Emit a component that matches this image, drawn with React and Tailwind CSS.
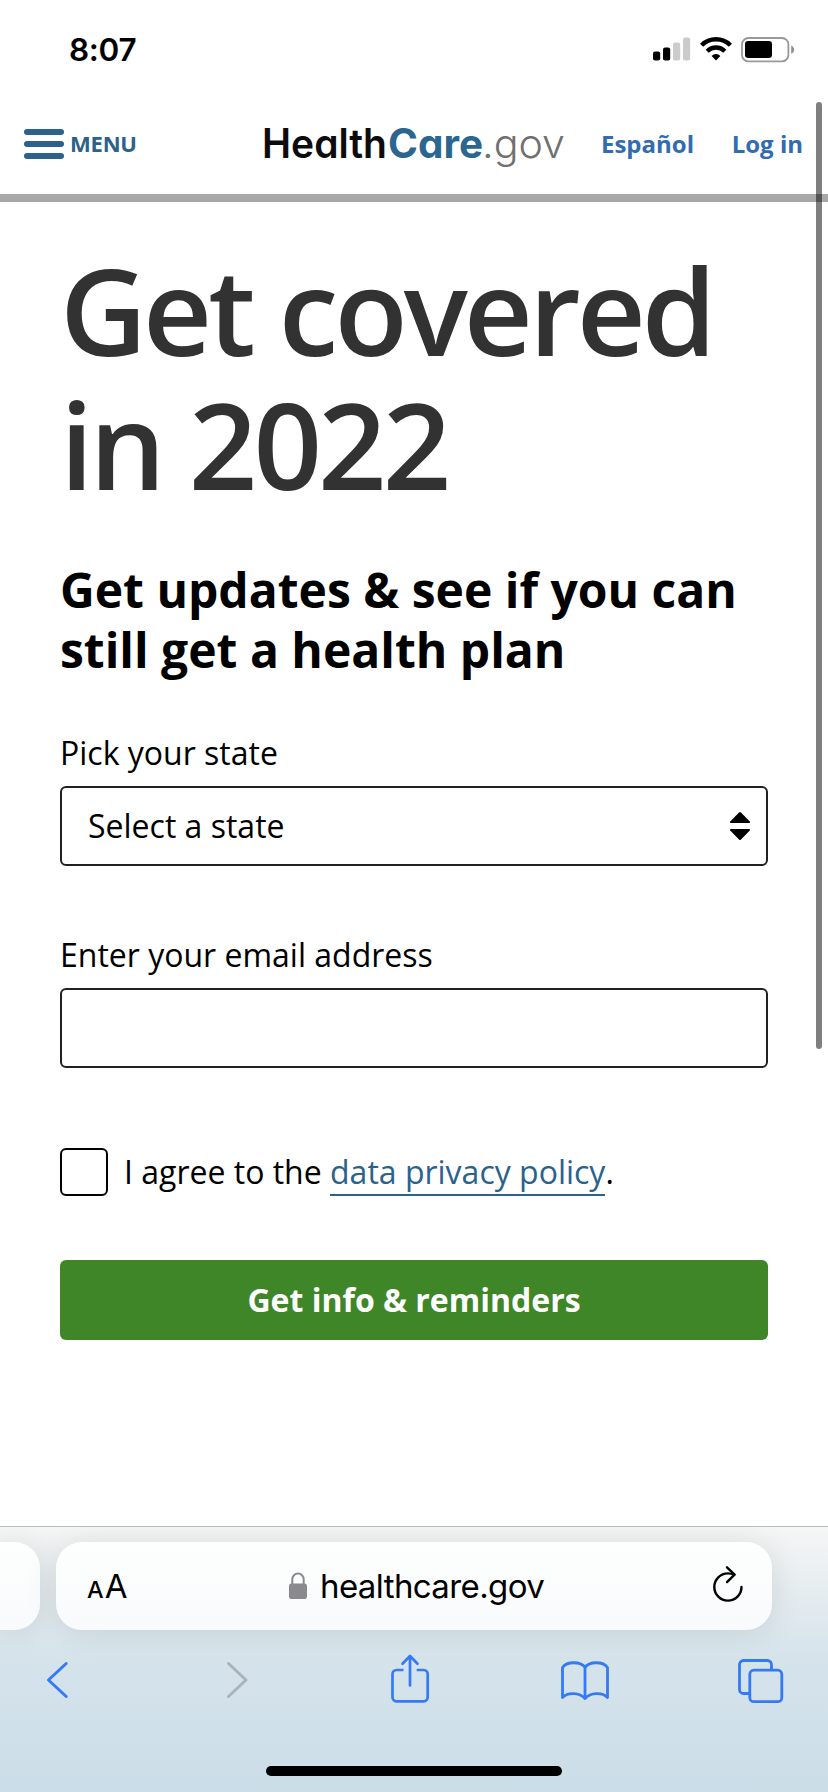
import React, { useState } from 'react';

const SignalIcon = () => (
  <svg width="38" height="24" viewBox="0 0 38 24">
    <rect x="0" y="14.5" width="7.2" height="9" rx="2" fill="#000" />
    <rect x="10" y="10.5" width="7.2" height="13" rx="2" fill="#000" />
    <rect x="20" y="5.5" width="7.2" height="18" rx="2" fill="#cbcbcb" />
    <rect x="30" y="0.5" width="7.2" height="23" rx="2" fill="#cbcbcb" />
  </svg>
);

const WifiIcon = () => (
  <svg width="32" height="24" viewBox="0 0 32 24" fill="none" stroke="#000">
    <path d="M1.6 8.2a20.4 20.4 0 0 1 28.8 0" strokeWidth="4.4" />
    <path d="M7.2 14.2a12.4 12.4 0 0 1 17.6 0" strokeWidth="4.4" />
    <path d="M11.6 18.9a6.2 6.2 0 0 1 8.8 0L16 23.6z" fill="#000" stroke="none" />
  </svg>
);

const BatteryIcon = () => (
  <svg width="54" height="26" viewBox="0 0 54 26">
    <rect x="1" y="1" width="46.4" height="23.4" rx="6.5" fill="none" stroke="#999" strokeWidth="1.8" />
    <rect x="4" y="4" width="27" height="17" rx="3.2" fill="#000" />
    <path d="M50.2 8.6c1.8.8 2.9 2.3 2.9 4.1s-1.1 3.3-2.9 4.1z" fill="#8e8e8e" />
  </svg>
);

// cv11 gives Inter its single-storey "a"
const Logo = () => (
  <svg
    className="overflow-visible font-['Inter',sans-serif] [font-feature-settings:'cv11']"
    width="304"
    height="62"
    viewBox="0 0 304 62"
    fontSize="40.5"
  >
    <text x="-2" y="44" fontWeight="600" fill="#0c0c0e" textLength="125" lengthAdjust="spacingAndGlyphs">Health</text>
    <text x="124" y="44" fontWeight="700" fill="#2a668f" textLength="95" lengthAdjust="spacingAndGlyphs">Care</text>
    <text x="218" y="44" fontWeight="300" fill="#707070" textLength="83" lengthAdjust="spacingAndGlyphs">.gov</text>
  </svg>
);

const StatusBar = () => (
  <div className="flex h-[100px] items-start justify-between pl-[69px] pr-[33px]">
    <div className="mt-[30px] font-['Inter',sans-serif] text-[31.5px] font-semibold leading-[40px] tracking-[-0.3px] text-black">8:07</div>
    <div className="mt-[37px] flex">
      <SignalIcon />
      <span className="ml-[9px]"><WifiIcon /></span>
      <span className="ml-[9px]"><BatteryIcon /></span>
    </div>
  </div>
);

const Header = () => (
  <header className="flex h-[102px] items-start border-b-8 border-[#a8a8a8]">
    <button className="ml-6 mt-[29px] flex flex-col gap-1.5">
      <span className="block h-1.5 w-10 rounded-full bg-[#2a628c]" />
      <span className="block h-1.5 w-10 rounded-full bg-[#2a628c]" />
      <span className="block h-1.5 w-10 rounded-full bg-[#2a628c]" />
    </button>
    <span className="ml-1.5 mt-[28px] w-[70px] text-[22px] font-bold leading-[30px] tracking-[-0.2px] text-[#2a628c]">MENU</span>
    <span className="ml-[124px] mt-3.5"><Logo /></span>
    <a className="ml-[33px] mt-[28px] text-[24px] font-bold leading-[32px] text-[#316cb0]">Español</a>
    <a className="ml-auto mr-[25px] mt-[28px] text-[24px] font-bold leading-[32px] text-[#316cb0]">Log in</a>
  </header>
);

const SignupForm = () => {
  const [email, setEmail] = useState('');

  return (
    <main className="h-[1324px] px-[60px] pt-[41px]">
      <h1 className="text-[120px] font-semibold leading-[134px] tracking-[-4px] text-[#323232]">
        Get covered
        <br />
        in 2022
      </h1>
      <h2 className="mt-[49px] text-[48px] font-bold leading-[60px] text-black">
        Get updates & see if you can
        <br />
        still get a health plan
      </h2>

      <form>
        <label className="mt-[51px] block text-[32px] leading-[44px] text-black">Pick your state</label>
        <div className="mt-[11px] flex h-20 items-center justify-between rounded-[6px] border-2 border-[#212121] pl-[26px] pr-[15px] text-[32px] text-black">
          Select a state
          <svg width="22" height="30" viewBox="0 0 22 30">
            <path d="M10 1.5q1-1 2 0l8.8 9q.8 1.5-.8 1.5H2q-1.600 0-.8-1.500z" />
            <path d="M10 28.5q1 1 2 0l8.8-9q.8-1.5-.8-1.5H2q-1.600 0-.8 1.500z" />
          </svg>
        </div>

        <label className="mt-[67px] block text-[32px] leading-[44px] text-black">Enter your email address</label>
        <input
          type="email"
          className="mt-[11px] block h-20 w-full rounded-[6px] border-2 border-[#212121] px-6 text-[32px] outline-none"
          value={email}
          onChange={(e) => setEmail(e.target.value)}
        />

        <div className="mt-20 flex h-12 items-center">
          <span className="block size-12 rounded-[6px] border-2 border-black" />
          <p className="ml-4 text-[32px] leading-[48px] text-black">
            I agree to the{' '}
            <a className="inline-block h-12 border-b-2 border-[#2a628c] text-[#2a628c]">data privacy policy</a>.
          </p>
        </div>

        <button type="button" className="mt-16 block h-20 w-full rounded-[6px] bg-[#3f8629] text-[32px] font-bold text-white">
          Get info & reminders
        </button>
      </form>
    </main>
  );
};

const AddressBar = () => (
  <div className="flex gap-4 pt-[15px]">
    <div className="h-[88px] w-10 rounded-r-[26px] bg-gradient-to-b from-[#fdfefd] to-[#f9fafc] shadow-[0_2px_32px_rgba(0,0,0,0.1)]" />
    <div className="flex h-[88px] w-[716px] items-center rounded-[26px] bg-gradient-to-b from-[#fdfefd] to-[#f9fafc] font-['Inter',sans-serif] text-black shadow-[0_2px_32px_rgba(0,0,0,0.1)]">
      <div className="ml-[31px] mt-1 flex w-[40px] items-baseline gap-px leading-[40px]">
        <span className="text-[23.5px] font-medium">A</span>
        <span className="text-[33px]">A</span>
      </div>
      <svg className="ml-[162px]" width="18" height="28" viewBox="0 0 18 28">
        <rect x="0" y="11.5" width="18" height="15.5" rx="2.8" fill="#8a8a8e" />
        <path d="M3.3 12V7.5a5.7 6 0 0 1 11.4 0V12" fill="none" stroke="#8a8a8e" strokeWidth="2" />
      </svg>
      <span className="ml-[13px] text-[33px] leading-[40px] tracking-[-0.6px]">healthcare.gov</span>
      <svg className="ml-auto mr-[28px] -mt-1" width="32" height="38" viewBox="0 0 32 38" fill="none" stroke="#000" strokeWidth="2.4" strokeLinecap="round" strokeLinejoin="round">
        <path d="M29.5 22a13.6 13.6 0 1 1-13.600-13.600c2.300 0 4.400.500 6.300 1.400" />
        <path d="M15 2.300l7.600 7.400-7.600 7.400" />
      </svg>
    </div>
  </div>
);

const Toolbar = () => (
  <nav className="flex h-[136px] items-start pl-[46px] text-[#347af6]">
    <svg className="mt-[30px]" width="24" height="40" viewBox="0 0 24 40" fill="none" stroke="currentColor" strokeWidth="3" strokeLinecap="round" strokeLinejoin="round">
      <path d="M20.2 3.5L2.5 20l17.7 16.5" />
    </svg>
    <svg className="ml-[154px] mt-[30px] text-[#a9b3b9]" width="24" height="40" viewBox="0 0 24 40" fill="none" stroke="currentColor" strokeWidth="3" strokeLinecap="round" strokeLinejoin="round">
      <path d="M4.5 3.5L22 20 4.5 36.5" />
    </svg>
    <svg className="ml-[142px] mt-[24px]" width="40" height="50" viewBox="0 0 40 50" fill="none" stroke="currentColor" strokeWidth="2.7" strokeLinecap="round" strokeLinejoin="round">
      <path d="M13.5 16H6.5a4 4 0 0 0-4 4v23.3a4 4 0 0 0 4 4h27.2a4 4 0 0 0 4-4V20a4 4 0 0 0-4-4h-7" strokeLinecap="butt" />
      <path d="M20 31.5V2.5M12.5 9.8L20 2l7.5 7.8" />
    </svg>
    <svg className="ml-[130px] mt-[30px]" width="50" height="42" viewBox="0 0 50 42" fill="none" stroke="currentColor" strokeWidth="2.8" strokeLinecap="round" strokeLinejoin="round">
      <path d="M25 38.5V7.5C21 1.3 7 1 2.5 7.5V37.5c5-5.400 17-5.400 22.500 1 5.500-6.400 17.500-6.400 22.500-1V7.500C43 1 29 1.300 25 7.500" />
    </svg>
    <svg className="ml-[127px] mt-[28px]" width="47" height="46" viewBox="0 0 47 46" fill="none" stroke="currentColor" strokeWidth="2.8">
      <path d="M34.5 11.5V6.5a4 4 0 0 0-4-4H6.5a4 4 0 0 0-4 4v25a4 4 0 0 0 4 4h5.5" />
      <rect x="12.8" y="12.2" width="32" height="31.5" rx="4" />
    </svg>
  </nav>
);

const App = () => {
  return (
    <div className="relative h-[1792px] w-[828px] overflow-hidden bg-white font-['Open_Sans',sans-serif]">
      <StatusBar />
      <Header />
      <SignupForm />

      {/* Browser chrome */}
      <footer className="h-[266px] overflow-hidden border-t border-[#b9bbbb] bg-gradient-to-b from-[#f5f6f5] via-[#d5e3eb] via-50% to-[#cbdde8]">
        <AddressBar />
        <Toolbar />
        <div className="mx-auto h-[10px] w-[296px] rounded-full bg-black" />
      </footer>

      {/* Page scroll indicator */}
      <div className="absolute left-[816px] top-[102px] h-[947px] w-1.5 rounded-full bg-black/50" />
    </div>
  );
};

export default App;
